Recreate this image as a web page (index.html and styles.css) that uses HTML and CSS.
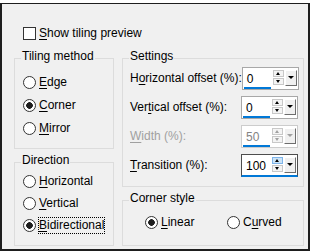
FILE: index.html
```html
<!DOCTYPE html>
<html lang="en">
<head>
    <meta charset="UTF-8" />
    <title>Tiling</title>
    <link rel="stylesheet" href="styles.css">
</head>
<body>
    <div class="dialog">
        <label class="check-row">
            <span class="checkbox"></span>
            <span><u>S</u>how tiling preview</span>
        </label>

        <div class="columns">
            <div class="col">
                <div class="group group-method">
                    <span class="group-title">Tiling method</span>
                    <div class="radio-list">
                        <label class="radio"><span class="dot"></span><span><u>E</u>dge</span></label>
                        <label class="radio"><span class="dot checked"></span><span><u>C</u>orner</span></label>
                        <label class="radio"><span class="dot"></span><span><u>M</u>irror</span></label>
                    </div>
                </div>
                <div class="group group-direction">
                    <span class="group-title">Direction</span>
                    <div class="radio-list tight">
                        <label class="radio"><span class="dot"></span><span><u>H</u>orizontal</span></label>
                        <label class="radio"><span class="dot"></span><span><u>V</u>ertical</span></label>
                        <label class="radio"><span class="dot checked"></span><span class="focus"><u>B</u>idirectional</span></label>
                    </div>
                </div>
            </div>

            <div class="col">
                <div class="group group-settings">
                    <span class="group-title">Settings</span>
                    <div class="field-row">
                        <span>H<u>o</u>rizontal offset (%):</span>
                        <div class="spin">
                            <span class="spin-value"><span class="spin-text">0</span><span class="spin-line"></span></span>
                            <span class="spin-arrows"><span class="btn-up"></span><span class="btn-down"></span></span>
                            <span class="spin-drop"></span>
                        </div>
                    </div>
                    <div class="field-row">
                        <span>Ver<u>t</u>ical offset (%):</span>
                        <div class="spin">
                            <span class="spin-value"><span class="spin-text">0</span><span class="spin-line"></span></span>
                            <span class="spin-arrows"><span class="btn-up"></span><span class="btn-down"></span></span>
                            <span class="spin-drop"></span>
                        </div>
                    </div>
                    <div class="field-row disabled">
                        <span><u>W</u>idth (%):</span>
                        <div class="spin">
                            <span class="spin-value"><span class="spin-text">50</span><span class="spin-line"></span></span>
                            <span class="spin-arrows"><span class="btn-up"></span><span class="btn-down"></span></span>
                            <span class="spin-drop"></span>
                        </div>
                    </div>
                    <div class="field-row">
                        <span><u>T</u>ransition (%):</span>
                        <div class="spin focused">
                            <span class="spin-value"><span class="spin-text">100</span></span>
                            <span class="spin-arrows"><span class="btn-up hot"></span><span class="btn-down"></span></span>
                            <span class="spin-drop"></span>
                        </div>
                    </div>
                </div>
                <div class="group group-corner">
                    <span class="group-title">Corner style</span>
                    <div class="radio-row">
                        <label class="radio"><span class="dot checked"></span><span><u>L</u>inear</span></label>
                        <label class="radio"><span class="dot"></span><span>C<u>u</u>rved</span></label>
                    </div>
                </div>
            </div>
        </div>
    </div>
</body>
</html>
```

FILE: styles.css
```css
body { margin: 0; padding-top: 3px; background: #fff; font-family: "Liberation Sans", Arial, sans-serif; font-size: 12px; line-height: 15px; color: #000; }
u { text-decoration-thickness: 1px; text-underline-offset: 2px; }

.dialog { width: 294px; height: 245px; background: #f0f0f0; border: 2px solid #1e1e1e; border-top-width: 1px; padding-left: 12px; }

.check-row { display: flex; align-items: center; gap: 3px; margin: 22px 0 0 9px; white-space: nowrap; }
.checkbox { width: 11px; height: 11px; border: 1px solid #333; background: #fff; }

.columns { display: grid; grid-template-columns: 100px 182px; column-gap: 8px; margin-top: 17px; }
.col { display: flex; flex-direction: column; gap: 13px; }

.group { position: relative; border: 1px solid #dcdcdc; box-sizing: border-box; white-space: nowrap; }
.group-title { position: absolute; top: -10px; left: 6px; padding: 0 1px; background: #f0f0f0; }
.group-method { height: 91px; padding: 16px 0 0 8px; }
.group-direction { height: 84px; padding: 11px 0 0 8px; }
.group-settings { height: 129px; padding: 8px 5px 0 7px; display: flex; flex-direction: column; gap: 6px; }
.group-corner { height: 46px; padding: 14px 0 0 22px; }

.radio-list { display: flex; flex-direction: column; gap: 8px; }
.radio-list.tight { gap: 7px; }
.radio-row { display: grid; grid-template-columns: 82px auto; }
.radio { display: flex; align-items: center; gap: 3px; }
.dot { width: 11px; height: 11px; border: 1px solid #333; border-radius: 50%; background: #fff; }
.dot.checked { background: radial-gradient(circle, #1e1e1e 0 3px, #fff 3.6px); }
.focus { outline: 1px dotted #000; outline-offset: 0; }

.field-row { display: flex; justify-content: space-between; align-items: center; height: 23px; }
.field-row.disabled { color: #a0a0a0; }

.spin { display: flex; width: 57px; height: 23px; box-sizing: border-box; border: 1px solid #a8a8a8; background: #fff; padding: 2px 1px 0 0; }
.spin-value { position: relative; width: 30px; margin-top: -2px; }
.spin-text { display: block; padding: 4px 0 0 4px; }
.spin-line { position: absolute; left: 1px; bottom: 0; width: 27px; height: 2px; background: #0078d7; }
.spin-arrows { display: flex; flex-direction: column; gap: 1px; width: 11px; }
.btn-up, .btn-down { position: relative; height: 7px; box-sizing: border-box; border: 1px solid #c8c8c8; background: #f4f4f4; }
.btn-up::after, .btn-down::after { content: ""; position: absolute; left: 2px; top: 1px; border-left: 2.5px solid transparent; border-right: 2.5px solid transparent; }
.btn-up::after { border-bottom: 3px solid #000; }
.btn-down::after { border-top: 3px solid #000; }
.btn-up.hot { background: #cce4f7; border-color: #7eb4ea; }
.spin-drop { position: relative; width: 12px; height: 16px; margin-left: 1px; box-sizing: border-box; background: #f0f0f0; border: 1px solid; border-color: #fff #6d6d6d #6d6d6d #fff; }
.spin-drop::after { content: ""; position: absolute; left: 2px; top: 5px; border-left: 3px solid transparent; border-right: 3px solid transparent; border-top: 3px solid #000; }

.disabled .spin { border-color: #cccccc; }
.disabled .spin-text { color: #838383; }
.disabled .btn-up::after { border-bottom-color: #a0a0a0; }
.disabled .btn-down::after { border-top-color: #a0a0a0; }
.disabled .spin-drop::after { border-top-color: #a0a0a0; }

.spin.focused { border-color: #4d4d4d; border-bottom: 2px solid #0078d7; }
```
